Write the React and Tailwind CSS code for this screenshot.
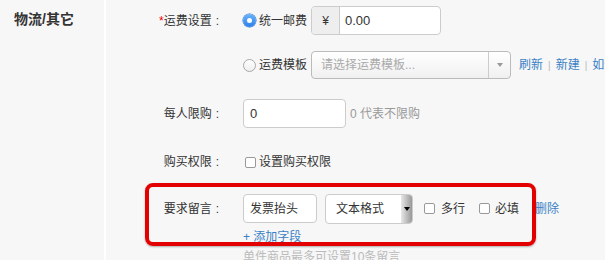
const font = { fontFamily: '"Liberation Sans", "Noto Sans CJK SC", sans-serif' };

const Label = ({ children, required }) => (
  <div className="w-[113px] shrink-0 whitespace-nowrap text-right text-[12px] text-[#333]">
    {required && <span className="text-[#e00]">*</span>}
    {children}
    <span className="ml-[4px]">:</span>
  </div>
);

const Radio = ({ checked }) =>
  checked ? (
    <span className="flex h-[13px] w-[13px] shrink-0 items-center justify-center rounded-full bg-gradient-to-b from-[#6ab4fb] to-[#2a7fe9] shadow-[0_0_0_0.5px_#2a6fcf]">
      <span className="h-[5px] w-[5px] rounded-full bg-white" />
    </span>
  ) : (
    <span className="h-[13px] w-[13px] shrink-0 rounded-full border border-[#a8a8a8] bg-gradient-to-b from-white to-[#eee]" />
  );

const Checkbox = () => (
  <span className="h-[11px] w-[11px] shrink-0 rounded-[2px] border border-[#999] bg-white" />
);

export default function App() {
  return (
    <div className="flex h-[260px] w-[605px] overflow-hidden bg-[#f7f7f7] text-[#333]" style={font}>
      <div className="w-[104px] shrink-0 pl-[14px] pt-[9px] text-[14px] font-bold">物流/其它</div>
      <div className="w-[2px] shrink-0 bg-white" />

      <div className="relative min-w-0 flex-1 whitespace-nowrap">
        {/* 运费设置 */}
        <div className="mt-[6px] flex h-[29px] items-center">
          <Label required>运费设置</Label>
          <div className="ml-[24px] flex shrink-0 items-center gap-[3px]">
            <Radio checked />
            <span className="text-[12px]">统一邮费</span>
          </div>
          <div className="ml-[4px] flex h-[29px] w-[130px] shrink-0 overflow-hidden rounded-[4px] border border-[#ccc] bg-white">
            <span className="flex w-[28px] items-center justify-center border-r border-[#ccc] bg-[#eee] text-[12px]">¥</span>
            <span className="flex items-center pl-[5px] text-[13px]">0.00</span>
          </div>
        </div>

        {/* 运费模板 */}
        <div className="mt-[16px] flex h-[28px] items-center">
          <div className="ml-[137px] flex shrink-0 items-center gap-[3px]">
            <Radio />
            <span className="text-[12px]">运费模板</span>
          </div>
          <div className="ml-[4px] flex h-[28px] w-[200px] shrink-0 overflow-hidden rounded-[4px] border border-[#bbb] bg-gradient-to-b from-white to-[#f0f0f0]">
            <span className="flex flex-1 items-center pl-[9px] text-[12px] text-[#aaa]">请选择运费模板...</span>
            <span className="flex w-[22px] items-center justify-center border-l border-[#ccc]">
              <span className="h-0 w-0 border-x-[3px] border-t-[4px] border-x-transparent border-t-[#999]" />
            </span>
          </div>
          <div className="ml-[8px] flex shrink-0 items-center gap-[5px] text-[12px] text-[#3a7fc6]">
            <span>刷新</span>
            <span className="text-[10px] text-[#bbb]">|</span>
            <span>新建</span>
            <span className="text-[10px] text-[#bbb]">|</span>
            <span>如何使用运费模板</span>
          </div>
        </div>

        {/* 每人限购 */}
        <div className="mt-[20px] flex h-[29px] items-center">
          <Label>每人限购</Label>
          <div className="ml-[24px] flex h-[29px] w-[103px] shrink-0 items-center rounded-[4px] border border-[#ccc] bg-white pl-[6px] text-[13px]">0</div>
          <span className="ml-[4px] text-[12px] text-[#999]">0 代表不限购</span>
        </div>

        {/* 购买权限 */}
        <div className="mt-[24px] flex h-[20px] items-center">
          <Label>购买权限</Label>
          <div className="ml-[26px] flex shrink-0 items-center gap-[3px]">
            <Checkbox />
            <span className="text-[12px]">设置购买权限</span>
          </div>
        </div>

        {/* 要求留言 */}
        <div className="mt-[22px] flex h-[29px] items-center">
          <Label>要求留言</Label>
          <div className="ml-[24px] flex h-[29px] w-[74px] shrink-0 items-center rounded-[4px] border border-[#ccc] bg-white pl-[6px] text-[12px]">发票抬头</div>
          <div className="ml-[8px] flex h-[30px] w-[88px] shrink-0 overflow-hidden rounded-[4px] border border-[#ccc] bg-white">
            <span className="flex flex-1 items-center pl-[10px] text-[12px]">文本格式</span>
            <span className="flex w-[11px] items-center justify-center bg-gradient-to-r from-[#e8e8e8] to-[#999]">
              <span className="h-0 w-0 border-x-[3px] border-t-[4px] border-x-transparent border-t-black" />
            </span>
          </div>
          <div className="ml-[11px] flex shrink-0 items-center gap-[6px]">
            <Checkbox />
            <span className="text-[12px]">多行</span>
          </div>
          <div className="ml-[14px] flex shrink-0 items-center gap-[5px]">
            <Checkbox />
            <span className="text-[12px]">必填</span>
          </div>
          <span className="ml-[16px] text-[12px] text-[#3a7fc6]">删除</span>
        </div>
        <div className="ml-[137px] mt-[6px] text-[12px] leading-[16px] text-[#3a7fc6]">+ 添加字段</div>
        <div className="ml-[137px] mt-[4px] text-[12px] leading-[16px] text-[#bbb]">单件商品最多可设置10条留言</div>

        {/* 标注框 */}
        <div className="pointer-events-none absolute left-[39px] top-[183px] h-[63px] w-[391px] rounded-[8px] border-[4px] border-[#e30000] shadow-[0_1px_2px_rgba(0,0,0,0.3)]" />
      </div>
    </div>
  );
}
